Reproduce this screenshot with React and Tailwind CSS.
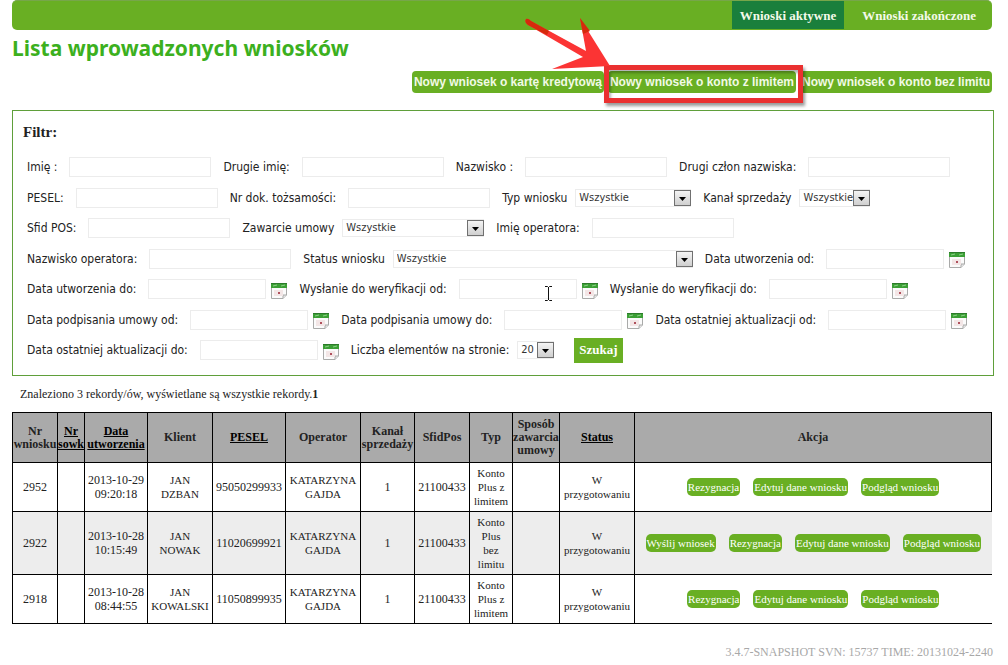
import clsx from 'clsx'

const tabs = [
  { label: 'Wnioski aktywne', active: true },
  { label: 'Wnioski zakończone', active: false },
]

const filterRows = [
  [
    { id: 'imie', label: 'Imię :', type: 'text' },
    { id: 'drugie-imie', label: 'Drugie imię:', type: 'text' },
    { id: 'nazwisko', label: 'Nazwisko :', type: 'text' },
    { id: 'drugi-czlon', label: 'Drugi człon nazwiska:', type: 'text' },
  ],
  [
    { id: 'pesel', label: 'PESEL:', type: 'text' },
    { id: 'nr-dok', label: 'Nr dok. tożsamości:', type: 'text' },
    { id: 'typ', label: 'Typ wniosku', type: 'select', value: 'Wszystkie', width: 'w-[116px]' },
    { id: 'kanal', label: 'Kanał sprzedaży', type: 'select', value: 'Wszystkie', width: 'w-[71px]' },
  ],
  [
    { id: 'sfid', label: 'Sfid POS:', type: 'text' },
    { id: 'zawarcie', label: 'Zawarcie umowy', type: 'select', value: 'Wszystkie', width: 'w-[142px]' },
    { id: 'imie-op', label: 'Imię operatora:', type: 'text' },
  ],
  [
    { id: 'nazwisko-op', label: 'Nazwisko operatora:', type: 'text' },
    { id: 'status', label: 'Status wniosku', type: 'select', value: 'Wszystkie', width: 'w-[300px]' },
    { id: 'utw-od', label: 'Data utworzenia od:', type: 'date' },
  ],
  [
    { id: 'utw-do', label: 'Data utworzenia do:', type: 'date' },
    { id: 'wer-od', label: 'Wysłanie do weryfikacji od:', type: 'date', caret: true },
    { id: 'wer-do', label: 'Wysłanie do weryfikacji do:', type: 'date' },
  ],
  [
    { id: 'podp-od', label: 'Data podpisania umowy od:', type: 'date' },
    { id: 'podp-do', label: 'Data podpisania umowy do:', type: 'date' },
    { id: 'akt-od', label: 'Data ostatniej aktualizacji od:', type: 'date' },
  ],
  [
    { id: 'akt-do', label: 'Data ostatniej aktualizacji do:', type: 'date' },
    { id: 'liczba', label: 'Liczba elementów na stronie:', type: 'select', value: '20', width: 'w-[37px]' },
    { id: 'szukaj', label: 'Szukaj', type: 'submit' },
  ],
]

const columns = [
  { label: 'Nr\nwniosku', width: 'w-[45px]' },
  { label: 'Nr\nsowk', width: 'w-[27px]', sortable: true },
  { label: 'Data\nutworzenia', width: 'w-[63px]', sortable: true },
  { label: 'Klient', width: 'w-[65px]', small: true },
  { label: 'PESEL', width: 'w-[73px]', sortable: true },
  { label: 'Operator', width: 'w-[75px]', small: true },
  { label: 'Kanał\nsprzedaży', width: 'w-[54px]' },
  { label: 'SfidPos', width: 'w-[55px]' },
  { label: 'Typ', width: 'w-[43px]', small: true },
  { label: 'Sposób\nzawarcia\numowy', width: 'w-[47px]' },
  { label: 'Status', width: 'w-[75px]', sortable: true, small: true },
  { label: 'Akcja', width: 'w-auto' },
]

const rows = [
  {
    cells: ['2952', '', '2013-10-29\n09:20:18', 'JAN\nDZBAN', '95050299933', 'KATARZYNA\nGAJDA', '1', '21100433', 'Konto\nPlus z\nlimitem', '', 'W\nprzygotowaniu'],
    actions: ['Rezygnacja', 'Edytuj dane wniosku', 'Podgląd wniosku'],
  },
  {
    cells: ['2922', '', '2013-10-28\n10:15:49', 'JAN\nNOWAK', '11020699921', 'KATARZYNA\nGAJDA', '1', '21100433', 'Konto\nPlus\nbez\nlimitu', '', 'W\nprzygotowaniu'],
    actions: ['Wyślij wniosek', 'Rezygnacja', 'Edytuj dane wniosku', 'Podgląd wniosku'],
  },
  {
    cells: ['2918', '', '2013-10-28\n08:44:55', 'JAN\nKOWALSKI', '11050899935', 'KATARZYNA\nGAJDA', '1', '21100433', 'Konto\nPlus z\nlimitem', '', 'W\nprzygotowaniu'],
    actions: ['Rezygnacja', 'Edytuj dane wniosku', 'Podgląd wniosku'],
  },
]

function CalendarIcon() {
  return (
    <svg width="16" height="16" viewBox="0 0 16 16" aria-hidden="true">
      <path d="M0.5 4.5V15.5H12L15.5 12V4.5Z" fill="#fbfbfb" stroke="#a9aaa9" />
      <path d="M12 15.5V12H15.5" fill="#e4e4e4" stroke="#a9aaa9" />
      <rect width="16" height="5" fill="#3b9f35" />
      <rect width="16" height="1" fill="#2c7a2a" />
      <path d="M2 3L6 2M10 3L14 2" stroke="#8fd08a" />
      <rect x="3" y="7" width="9" height="6" fill="#f3e6e6" />
      <rect x="7" y="9" width="2" height="2" fill="#b0505c" />
    </svg>
  )
}

function TextCursor() {
  return (
    <svg className="absolute left-[85px] top-[6px] pointer-events-none" width="9" height="17" viewBox="0 0 9 17" aria-hidden="true">
      <path d="M1 1.5H3.5L4.5 2.5L5.5 1.5H8M4.5 2V15M1 15.5H3.5L4.5 14.5L5.5 15.5H8" fill="none" stroke="#111" />
    </svg>
  )
}

function Select({ id, value, width }) {
  return (
    <div className={clsx('relative shrink-0', width)}>
      <select
        id={id}
        defaultValue={value}
        className="block h-[18px] w-full appearance-none border border-[#ececec] bg-white pl-[3px] text-[11px] leading-4 text-[#333]"
      >
        <option>{value}</option>
      </select>
      <span className="pointer-events-none absolute right-0 top-px flex h-4 w-[17px] items-center justify-center border border-[#707070] bg-linear-to-b from-[#f4f4f4] to-[#cfcfcf] pt-0.5">
        <svg width="7" height="4" viewBox="0 0 7 4" aria-hidden="true">
          <path d="M0 0H7L3.5 4Z" fill="#000" />
        </svg>
      </span>
    </div>
  )
}

function Field({ id, label, type, value, width, caret }) {
  if (type === 'submit') {
    return (
      <button type="submit" className="ml-2 h-[25px] bg-[#69af23] px-[5px] font-['Liberation_Serif',serif] text-[13px] font-bold text-white">
        {label}
      </button>
    )
  }
  return (
    <div className={clsx('flex items-center', type === 'select' ? 'gap-2' : 'gap-3')}>
      <label htmlFor={id} className="whitespace-nowrap">
        {label}
      </label>
      {type === 'select' && <Select id={id} value={value} width={width} />}
      {type === 'text' && <input id={id} type="text" className="h-5 w-[142px] border border-[#ececec] bg-white px-1" />}
      {type === 'date' && (
        <div className="relative flex items-center gap-[5px]">
          <input id={id} type="text" className="h-5 w-[118px] border border-[#ececec] bg-white px-1" />
          <button type="button" aria-label={label} className="mt-[3px]">
            <CalendarIcon />
          </button>
          {caret && <TextCursor />}
        </div>
      )}
    </div>
  )
}

// red frame and arrow pointing at the highlighted button
function Highlight() {
  return (
    <>
      <span className="pointer-events-none absolute -bottom-[10px] -left-1 -right-[7px] -top-[6px] border-5 border-[#ea3030] shadow-[2px_3px_3px_rgba(0,0,0,0.4),inset_2px_3px_3px_rgba(0,0,0,0.3)]" />
      <svg className="pointer-events-none absolute -left-[84px] -top-[54px]" width="90" height="56" viewBox="0 0 90 56" aria-hidden="true">
        <path d="M2 2Q4 1 7 4L62 34L56 1L86 49L28 52L59 40L4 8Q0 5 2 2Z" fill="#fb3434" />
        <path d="M2 2Q4 1 7 4L25 14L23 18L4 8Q0 5 2 2Z" fill="#d52a0c" />
        <path d="M56 1L59 17L66 14Z" fill="#d52a0c" />
      </svg>
    </>
  )
}

function NewButton({ children, highlighted }) {
  return (
    <div className={clsx('relative', highlighted && 'z-10')}>
      <button type="button" className="block h-[22px] whitespace-nowrap rounded-sm bg-[#69af23] px-0.5 text-xs font-bold text-[#f2fae6]">
        {children}
      </button>
      {highlighted && <Highlight />}
    </div>
  )
}

export default function App() {
  return (
    <div className="min-h-screen bg-white pl-3 pr-[14px] font-['Liberation_Serif',serif] text-xs text-[#222]">
      <nav className="mr-0.5 flex h-[30px] justify-end gap-[10px] rounded-[5px] border-t border-[#77a64a] bg-[#69af23] pr-2">
        {tabs.map((tab) => (
          <a
            key={tab.label}
            href="#"
            className={clsx('flex h-7 items-center px-2 pt-0.5 text-[13px] font-bold text-[#f4faea]', tab.active && 'bg-[#1a7f3c]')}
          >
            {tab.label}
          </a>
        ))}
      </nav>

      <h1 className="mt-1 font-['Noto_Sans',sans-serif] text-[21px] font-bold leading-7 text-[#3cb01e]">
        Lista wprowadzonych wniosków
      </h1>

      <div className="mr-0.5 mt-[9px] flex justify-end gap-1 font-['Liberation_Sans',sans-serif]">
        <NewButton>Nowy wniosek o kartę kredytową</NewButton>
        <NewButton highlighted>Nowy wniosek o konto z limitem</NewButton>
        <NewButton>Nowy wniosek o konto bez limitu</NewButton>
      </div>

      <form className="mt-[17px] border border-[#5f9f3a] px-[10px] pb-[15px] pt-3" onSubmit={(e) => e.preventDefault()}>
        <h2 className="text-[15px] font-bold leading-[18px]">Filtr:</h2>
        <div className="ml-1 mt-4 flex h-[203px] flex-col justify-between font-['DejaVu_Sans_Condensed','DejaVu_Sans',sans-serif]">
          {filterRows.map((fields) => (
            <div key={fields[0].id} className="flex h-5 items-center gap-3">
              {fields.map((field) => (
                <Field key={field.id} {...field} />
              ))}
            </div>
          ))}
        </div>
      </form>

      <p className="ml-2 mt-[10px] leading-4">
        Znaleziono 3 rekordy/ów, wyświetlane są wszystkie rekordy.<strong>1</strong>
      </p>

      <div className="mr-0.5 mt-[10px]">
        <table className="w-full table-fixed border-collapse text-center">
          <thead>
            <tr className="bg-[#aaa]">
              {columns.map((col) => (
                <th key={col.label} className={clsx('h-[50px] border border-black p-0 leading-[13px] whitespace-pre', col.width)}>
                  {col.sortable ? (
                    <a href="#" className="text-black underline">
                      {col.label}
                    </a>
                  ) : (
                    col.label
                  )}
                </th>
              ))}
            </tr>
          </thead>
          <tbody>
            {rows.map((row, i) => (
              <tr key={row.cells[0]} className="even:bg-[#ededed]">
                {row.cells.map((cell, j) => (
                  <td
                    key={j}
                    className={clsx('whitespace-pre border border-black px-0 py-[3px] leading-[14px]', columns[j].small && 'text-[11px]')}
                  >
                    {cell}
                  </td>
                ))}
                <td className={clsx('border-y border-l border-black p-0', i === 0 && 'border-r')}>
                  <div className="flex justify-center gap-[13px]">
                    {row.actions.map((action) => (
                      <button key={action} type="button" className="h-[18px] whitespace-nowrap rounded-[5px] bg-[#69af23] px-px text-[11px] leading-4 text-white">
                        {action}
                      </button>
                    ))}
                  </div>
                </td>
              </tr>
            ))}
          </tbody>
        </table>
      </div>

      <footer className="mr-px mt-5 text-right leading-4 text-[#a8a8a8]">3.4.7-SNAPSHOT SVN: 15737 TIME: 20131024-2240</footer>
    </div>
  )
}
